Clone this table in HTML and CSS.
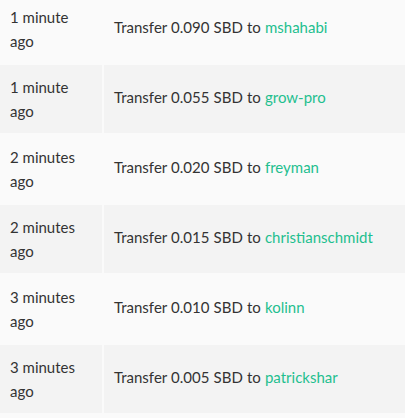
FILE: index.html
```html
<!DOCTYPE html>
<html>
<head>
<meta charset="utf-8">
<link rel="stylesheet" href="styles.css">
</head>
<body>
<div class="list">
  <div class="row">
    <div class="cell time">1 minute ago</div>
    <div class="cell op">Transfer 0.090 SBD to <a class="user" href="#">mshahabi</a></div>
  </div>
  <div class="row alt">
    <div class="cell time">1 minute ago</div>
    <div class="cell op">Transfer 0.055 SBD to <a class="user" href="#">grow-pro</a></div>
  </div>
  <div class="row">
    <div class="cell time">2 minutes ago</div>
    <div class="cell op">Transfer 0.020 SBD to <a class="user" href="#">freyman</a></div>
  </div>
  <div class="row alt">
    <div class="cell time">2 minutes ago</div>
    <div class="cell op">Transfer 0.015 SBD to <a class="user" href="#">christianschmidt</a></div>
  </div>
  <div class="row">
    <div class="cell time">3 minutes ago</div>
    <div class="cell op">Transfer 0.010 SBD to <a class="user" href="#">kolinn</a></div>
  </div>
  <div class="row alt">
    <div class="cell time">3 minutes ago</div>
    <div class="cell op">Transfer 0.005 SBD to <a class="user" href="#">patrickshar</a></div>
  </div>
</div>
</body>
</html>
```

FILE: styles.css
```css
html, body {
  margin: 0;
  padding: 0;
  background: #fafafa;
}
body {
  font-family: Lato, "Liberation Sans", sans-serif;
  font-size: 15px;
  line-height: 24px;
  color: #333333;
  overflow: hidden;
}
.list {
  display: flex;
  flex-direction: column;
  gap: 2px;
  margin-top: -5px;
}
.row {
  display: grid;
  grid-template-columns: 102px 1fr;
  column-gap: 2px;
  height: 68px;
}
.row.alt .cell {
  background: #f3f3f3;
}
.cell {
  display: flex;
  align-items: center;
  padding: 0 10px;
}
.op {
  display: block;
  padding-top: 20px;
  word-spacing: 0.3px;
  white-space: nowrap;
}
.user {
  color: #1fbf8f;
  text-decoration: none;
}
```
